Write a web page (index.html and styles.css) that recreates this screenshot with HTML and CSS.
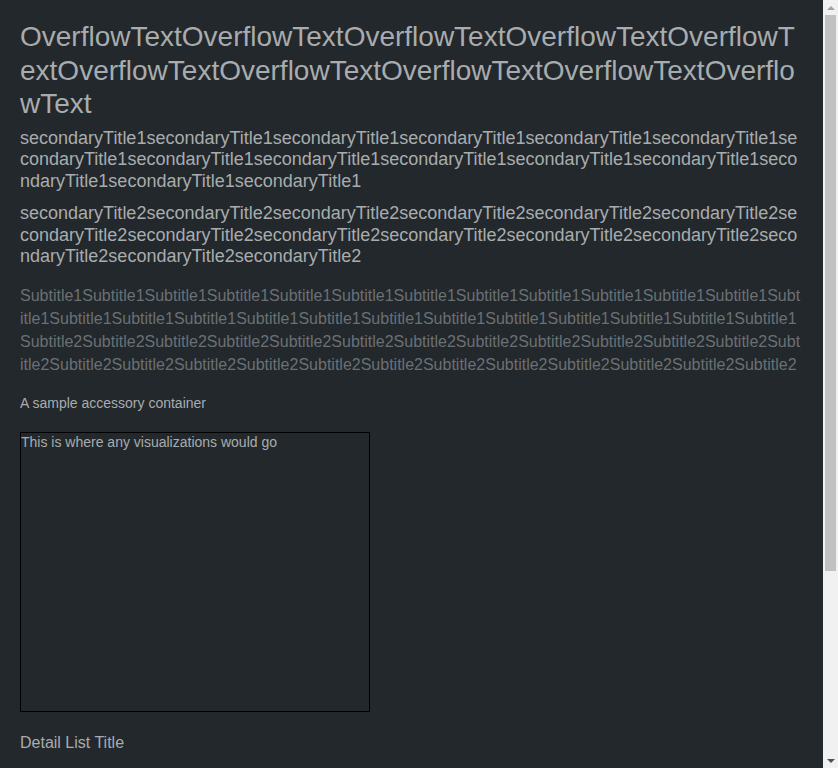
FILE: index.html
```html
<!DOCTYPE html>
<html lang="en">
<head>
<meta charset="utf-8">
<title>Overflow Text</title>
<link rel="stylesheet" href="styles.css">
</head>
<body>
<div class="viewport">
  <main class="page">
    <header class="header">
      <h1 class="title">OverflowTextOverflowTextOverflowTextOverflowTextOverflowTextOverflowTextOverflowTextOverflowTextOverflowTextOverflowText</h1>
      <h2 class="secondary">secondaryTitle1secondaryTitle1secondaryTitle1secondaryTitle1secondaryTitle1secondaryTitle1secondaryTitle1secondaryTitle1secondaryTitle1secondaryTitle1secondaryTitle1secondaryTitle1secondaryTitle1secondaryTitle1secondaryTitle1</h2>
      <h2 class="secondary">secondaryTitle2secondaryTitle2secondaryTitle2secondaryTitle2secondaryTitle2secondaryTitle2secondaryTitle2secondaryTitle2secondaryTitle2secondaryTitle2secondaryTitle2secondaryTitle2secondaryTitle2secondaryTitle2secondaryTitle2</h2>
      <div class="subtitles">
        <p class="subtitle">Subtitle1Subtitle1Subtitle1Subtitle1Subtitle1Subtitle1Subtitle1Subtitle1Subtitle1Subtitle1Subtitle1Subtitle1Subtitle1Subtitle1Subtitle1Subtitle1Subtitle1Subtitle1Subtitle1Subtitle1Subtitle1Subtitle1Subtitle1Subtitle1Subtitle1</p>
        <p class="subtitle">Subtitle2Subtitle2Subtitle2Subtitle2Subtitle2Subtitle2Subtitle2Subtitle2Subtitle2Subtitle2Subtitle2Subtitle2Subtitle2Subtitle2Subtitle2Subtitle2Subtitle2Subtitle2Subtitle2Subtitle2Subtitle2Subtitle2Subtitle2Subtitle2Subtitle2</p>
      </div>
    </header>
    <div class="accessory">A sample accessory container</div>
    <div class="viz">This is where any visualizations would go</div>
    <section class="detail">
      <h3 class="detail-title">Detail List Title</h3>
      <div class="detail-list"></div>
    </section>
  </main>
  <div class="scrollbar" aria-hidden="true">
    <div class="sb-btn sb-up"><span class="tri-up"></span></div>
    <div class="sb-track"><div class="sb-thumb"></div></div>
    <div class="sb-btn sb-down"><span class="tri-down"></span></div>
  </div>
</div>
</body>
</html>
```

FILE: styles.css
```css
html, body {
  margin: 0;
  padding: 0;
  background: #22282c;
}
body {
  font-family: "Liberation Sans", Arial, sans-serif;
  color: #a9acaf;
}
.viewport {
  display: flex;
  height: 768px;
  overflow: hidden;
}
.page {
  flex: 1;
  min-width: 0;
  padding: 20px 20px 40px;
}
.title {
  margin: 0;
  font-size: 28px;
  line-height: 33.5px;
  font-weight: normal;
  color: #a9acae;
  word-break: break-all;
}
.secondary {
  margin: 7px 0 0;
  font-size: 18px;
  line-height: 21.6px;
  font-weight: normal;
  color: #a9acae;
  word-break: break-all;
}
.secondary + .secondary {
  margin-top: 11px;
}
.subtitles {
  margin-top: 16px;
}
.subtitle {
  margin: 0;
  font-size: 16px;
  line-height: 23px;
  color: #6b7074;
  word-break: break-all;
}
.accessory {
  margin-top: 17px;
  font-size: 14px;
  line-height: 20px;
  color: #a9acae;
}
.viz {
  margin-top: 19px;
  width: 348px;
  height: 278px;
  border: 1px solid #000;
  font-size: 14px;
  line-height: 18px;
  color: #a9acae;
}
.detail {
  margin-top: 20px;
}
.detail-title {
  margin: 0;
  font-size: 16px;
  line-height: 21px;
  font-weight: normal;
  color: #a9acae;
}
.detail-list {
  height: 220px;
}
.scrollbar {
  flex: 0 0 15px;
  width: 15px;
  height: 768px;
  background: #f1f1f1;
  display: flex;
  flex-direction: column;
}
.sb-btn {
  flex: 0 0 15px;
  display: flex;
  align-items: center;
  justify-content: center;
}
.sb-track {
  flex: 1;
  display: flex;
  flex-direction: column;
}
.sb-thumb {
  height: 556px;
  margin: 0 2px;
  background: #c1c1c1;
}
.tri-up {
  width: 0;
  height: 0;
  border-left: 4px solid transparent;
  border-right: 4px solid transparent;
  border-bottom: 4px solid #a3a3a3;
}
.tri-down {
  width: 0;
  height: 0;
  border-left: 4px solid transparent;
  border-right: 4px solid transparent;
  border-top: 4px solid #505050;
}
```
